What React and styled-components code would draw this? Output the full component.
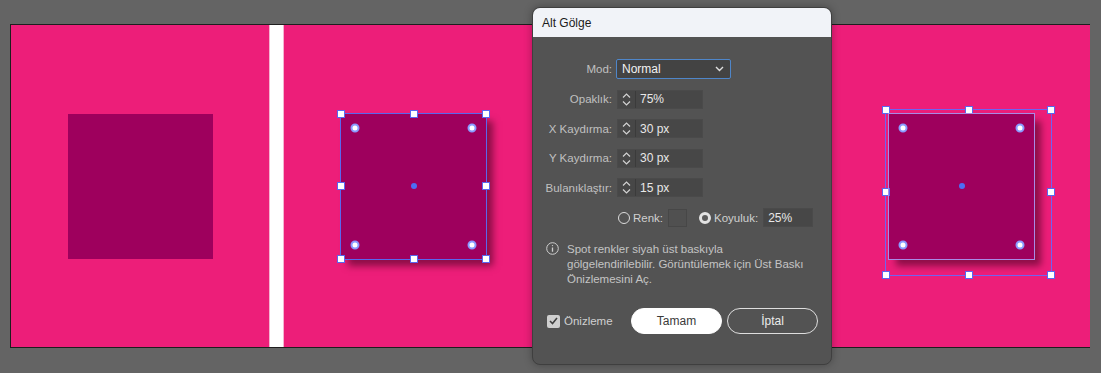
import React from 'react';
import styled, { createGlobalStyle } from 'styled-components';

const GlobalStyle = createGlobalStyle`
  html, body {
    margin: 0;
    padding: 0;
  }
  body {
    background: #646464;
    font-family: "Liberation Sans", Arial, sans-serif;
    width: 1101px;
    height: 373px;
    overflow: hidden;
  }
`;

const Stage = styled.div`
  position: relative;
  width: 1101px;
  height: 373px;
  padding: 24px 0 0 10px;
  box-sizing: border-box;
`;

const Board = styled.div`
  display: flex;
  width: 1080px;
  height: 324px;
  border: 1px solid #1e1e1e;
  border-right: none;
  box-sizing: border-box;
`;

const Artboard = styled.div`
  flex: ${p => (p.$w ? 'none' : 1)};
  width: ${p => (p.$w ? `${p.$w}px` : 'auto')};
  background: #ed1e79;
  display: flex;
  align-items: center;
  justify-content: center;
  padding-left: ${p => p.$shift || 0}px;
  box-sizing: border-box;
`;

const Gap = styled.div`
  width: 15px;
  flex: none;
  background: #fff;
  box-shadow: inset 1px 0 0 #f5b3d0, inset -1px 0 0 #f5b3d0;
`;

const Square = styled.div`
  position: relative;
  width: 145px;
  height: 145px;
  background: #9e005d;
  box-shadow: ${p => (p.$shadow ? '7px 7px 7px rgba(60, 0, 30, 0.55)' : 'none')};
`;

const Frame = styled.div`
  position: absolute;
  top: ${p => p.$t}px;
  left: ${p => p.$l}px;
  right: ${p => p.$r}px;
  bottom: ${p => p.$b}px;
  border: 1px solid ${p => p.$color};
`;

const Handle = styled.span`
  position: absolute;
  width: 6px;
  height: 6px;
  background: #fff;
  border: 1px solid #5a66ee;
  left: ${p => p.$x};
  top: ${p => p.$y};
  transform: translate(-50%, -50%);
`;

const Widget = styled.span`
  position: absolute;
  width: 5px;
  height: 5px;
  border-radius: 50%;
  background: #fff;
  border: 2px solid #8a9bff;
  left: ${p => p.$x};
  top: ${p => p.$y};
  transform: translate(-50%, -50%);
`;

const CenterDot = styled.span`
  position: absolute;
  width: 6px;
  height: 6px;
  border-radius: 50%;
  background: #4d6df5;
  left: 50%;
  top: 50%;
  transform: translate(-50%, -50%);
`;

const Dialog = styled.div`
  position: absolute;
  left: 532px;
  top: 7px;
  width: 300px;
  height: 358px;
  box-sizing: border-box;
  background: #535353;
  border: 1px solid #3f3f3f;
  border-radius: 8px;
  overflow: hidden;
  box-shadow: 0 0 8px rgba(0, 0, 0, 0.3);
  color: #c4c4c4;
  font-size: 11.5px;
`;

const TitleBar = styled.div`
  height: 29px;
  display: flex;
  align-items: center;
  padding-left: 9px;
  background: #f1f3f8;
  color: #1b1b1b;
  font-size: 12px;
`;

const Body = styled.div`
  padding-top: 22px;
`;

const Form = styled.div`
  display: grid;
  grid-template-columns: 79px auto;
  column-gap: 5px;
  row-gap: 10.5px;
  align-items: center;
`;

const Label = styled.div`
  text-align: right;
  color: #c0c0c0;
  white-space: nowrap;
`;

const Select = styled.div`
  width: 115px;
  height: 20px;
  box-sizing: border-box;
  margin-left: -1px;
  display: flex;
  align-items: center;
  justify-content: space-between;
  padding: 0 6px 0 5px;
  background: #434343;
  border: 1px solid #4f86c9;
  border-radius: 2px;
  color: #f2f2f2;
  font-size: 12px;
`;

const Field = styled.div`
  display: flex;
  height: 19px;
  width: 86px;
  background: #474747;
  border: 1px solid #4a4a4a;
  box-sizing: border-box;
`;

const Spin = styled.div`
  width: 17px;
  flex: none;
  border-right: 1px solid #3b3b3b;
  display: flex;
  align-items: center;
  justify-content: center;
`;

const Value = styled.div`
  flex: 1;
  display: flex;
  align-items: center;
  padding-left: 4px;
  color: #e8e8e8;
  font-size: 12px;
`;

const OptionRow = styled.div`
  display: flex;
  align-items: center;
  margin: 11px 0 0 85px;
  height: 19px;
`;

const Radio = styled.span`
  width: 12px;
  height: 12px;
  box-sizing: border-box;
  border-radius: 50%;
  flex: none;
  margin-left: ${p => p.$ml || 0}px;
  border: ${p => (p.$on ? '3.5px solid #e2e2e2' : '1.5px solid #dcdcdc')};
  background: ${p => (p.$on ? '#5a5a5a' : 'transparent')};
`;

const OptionLabel = styled.span`
  margin-left: 3px;
  color: #d0d0d0;
`;

const Swatch = styled.span`
  width: 19px;
  height: 18px;
  margin-left: 5px;
  box-sizing: border-box;
  background: #505050;
  border: 1px solid #474747;
`;

const SmallInput = styled.div`
  width: 50px;
  height: 19px;
  margin-left: 5px;
  box-sizing: border-box;
  background: #474747;
  border: 1px solid #4a4a4a;
  padding-left: 4px;
  display: flex;
  align-items: center;
  color: #e8e8e8;
  font-size: 12px;
`;

const Info = styled.div`
  display: flex;
  margin: 15px 0 0 13px;
  gap: 8px;
`;

const InfoText = styled.div`
  line-height: 15px;
  color: #c4c4c4;
  white-space: nowrap;
`;

const Footer = styled.div`
  display: flex;
  align-items: center;
  margin: 21px 0 0 14px;
`;

const Check = styled.span`
  width: 13px;
  height: 13px;
  border-radius: 2px;
  background: #cfcfcf;
  display: flex;
  align-items: center;
  justify-content: center;
`;

const CheckLabel = styled.span`
  margin-left: 4px;
  width: 60px;
  color: #d0d0d0;
`;

const Button = styled.button`
  width: 91px;
  height: 26px;
  margin-left: ${p => p.$ml}px;
  border-radius: 13px;
  box-sizing: border-box;
  font-family: inherit;
  font-size: 12px;
  cursor: pointer;
  border: 1.5px solid ${p => (p.$primary ? '#fff' : '#dedede')};
  background: ${p => (p.$primary ? '#fff' : 'transparent')};
  color: ${p => (p.$primary ? '#3a3a3a' : '#ececec')};
`;

const SpinIcon = () => (
  <svg width="9" height="13" viewBox="0 0 9 13" fill="none" stroke="#d2d2d2" strokeWidth="1.2">
    <polyline points="1,4.5 4.5,1 8,4.5" />
    <polyline points="1,8.5 4.5,12 8,8.5" />
  </svg>
);

const Chevron = () => (
  <svg width="9" height="6" viewBox="0 0 9 6" fill="none" stroke="#e0e0e0" strokeWidth="1.4">
    <polyline points="1,1 4.5,4.5 8,1" />
  </svg>
);

const InfoIcon = () => (
  <svg width="13" height="13" viewBox="0 0 13 13" fill="none" stroke="#cfcfcf" strokeWidth="1">
    <circle cx="6.5" cy="6.5" r="5.8" />
    <line x1="6.5" y1="5.5" x2="6.5" y2="9.8" strokeWidth="1.3" />
    <circle cx="6.5" cy="3.6" r="0.7" fill="#cfcfcf" stroke="none" />
  </svg>
);

const CheckMark = () => (
  <svg width="9" height="8" viewBox="0 0 9 8" fill="none" stroke="#404040" strokeWidth="1.6">
    <polyline points="1,4 3.5,6.5 8,1" />
  </svg>
);

const spots = ['0%', '50%', '100%'];

const Handles = () =>
  spots.flatMap(y =>
    spots
      .filter(x => !(x === '50%' && y === '50%'))
      .map(x => <Handle key={x + y} $x={x} $y={y} />)
  );

const Widgets = () => (
  <>
    <Widget $x="14px" $y="14px" />
    <Widget $x="calc(100% - 14px)" $y="14px" />
    <Widget $x="14px" $y="calc(100% - 14px)" />
    <Widget $x="calc(100% - 14px)" $y="calc(100% - 14px)" />
    <CenterDot />
  </>
);

const rows = [
  ['Opaklık:', '75%'],
  ['X Kaydırma:', '30 px'],
  ['Y Kaydırma:', '30 px'],
  ['Bulanıklaştır:', '15 px'],
];

export default function App() {
  return (
    <Stage>
      <GlobalStyle />
      <Board>
        <Artboard $w={258}>
          <Square />
        </Artboard>
        <Gap />
        <Artboard $w={259}>
          <Square $shadow>
            <Frame $t={-1} $l={-1} $r={-1} $b={-1} $color="#5a66ee">
              <Handles />
            </Frame>
            <Widgets />
          </Square>
        </Artboard>
        <Artboard />
        <Artboard $w={259} $shift={2}>
          <Square $shadow>
            <Frame $t={-5} $l={-4} $r={-18} $b={-17} $color="#6f63f2">
              <Handles />
            </Frame>
            <Frame $t={-1} $l={-1} $r={-1} $b={-1} $color="#a98ae6" />
            <Widgets />
          </Square>
        </Artboard>
      </Board>

      <Dialog>
        <TitleBar>Alt Gölge</TitleBar>
        <Body>
          <Form>
            <Label>Mod:</Label>
            <Select>
              <span>Normal</span>
              <Chevron />
            </Select>
            {rows.map(([label, value]) => (
              <React.Fragment key={label}>
                <Label>{label}</Label>
                <Field>
                  <Spin>
                    <SpinIcon />
                  </Spin>
                  <Value>{value}</Value>
                </Field>
              </React.Fragment>
            ))}
          </Form>
          <OptionRow>
            <Radio />
            <OptionLabel>Renk:</OptionLabel>
            <Swatch />
            <Radio $on $ml={12} />
            <OptionLabel>Koyuluk:</OptionLabel>
            <SmallInput>25%</SmallInput>
          </OptionRow>
          <Info>
            <InfoIcon />
            <InfoText>
              Spot renkler siyah üst baskıyla
              <br />
              gölgelendirilebilir. Görüntülemek için Üst Baskı
              <br />
              Önizlemesini Aç.
            </InfoText>
          </Info>
          <Footer>
            <Check>
              <CheckMark />
            </Check>
            <CheckLabel>Önizleme</CheckLabel>
            <Button $primary $ml={7}>Tamam</Button>
            <Button $ml={5}>İptal</Button>
          </Footer>
        </Body>
      </Dialog>
    </Stage>
  );
}
